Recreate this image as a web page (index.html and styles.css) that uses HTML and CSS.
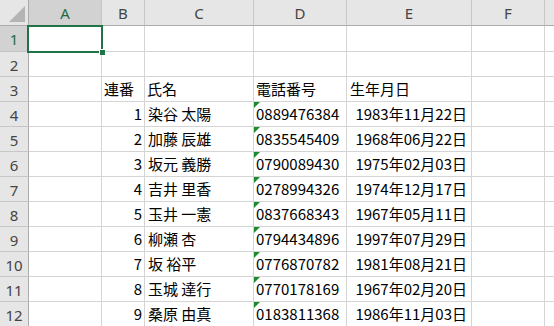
FILE: index.html
```html
<!DOCTYPE html>
<html lang="ja">
<head>
    <meta charset="UTF-8">
    <title>Sheet1</title>
    <link rel="stylesheet" href="styles.css">
</head>
<body>
    <div class="sheet">
        <div class="grid">
            <div class="row">
                <div class="corner"><span class="corner-mark"></span></div>
                <div class="colhead selected">A</div>
                <div class="colhead">B</div>
                <div class="colhead">C</div>
                <div class="colhead">D</div>
                <div class="colhead">E</div>
                <div class="colhead">F</div>
                <div class="colhead last"></div>
            </div>
            <div class="row">
                <div class="rowhead selected">1</div>
                <div class="cell"></div><div class="cell"></div><div class="cell"></div>
                <div class="cell"></div><div class="cell"></div><div class="cell"></div><div class="cell"></div>
            </div>
            <div class="row">
                <div class="rowhead">2</div>
                <div class="cell"></div><div class="cell"></div><div class="cell"></div>
                <div class="cell"></div><div class="cell"></div><div class="cell"></div><div class="cell"></div>
            </div>
            <div class="row">
                <div class="rowhead">3</div>
                <div class="cell"></div>
                <div class="cell">連番</div>
                <div class="cell">氏名</div>
                <div class="cell">電話番号</div>
                <div class="cell label">生年月日</div>
                <div class="cell"></div><div class="cell"></div>
            </div>
            <div class="row">
                <div class="rowhead">4</div>
                <div class="cell"></div>
                <div class="cell num">1</div>
                <div class="cell name">染谷 太陽</div>
                <div class="cell tel">0889476384</div>
                <div class="cell date">1983年11月22日</div>
                <div class="cell"></div><div class="cell"></div>
            </div>
            <div class="row">
                <div class="rowhead">5</div>
                <div class="cell"></div>
                <div class="cell num">2</div>
                <div class="cell name">加藤 辰雄</div>
                <div class="cell tel">0835545409</div>
                <div class="cell date">1968年06月22日</div>
                <div class="cell"></div><div class="cell"></div>
            </div>
            <div class="row">
                <div class="rowhead">6</div>
                <div class="cell"></div>
                <div class="cell num">3</div>
                <div class="cell name">坂元 義勝</div>
                <div class="cell tel">0790089430</div>
                <div class="cell date">1975年02月03日</div>
                <div class="cell"></div><div class="cell"></div>
            </div>
            <div class="row">
                <div class="rowhead">7</div>
                <div class="cell"></div>
                <div class="cell num">4</div>
                <div class="cell name">吉井 里香</div>
                <div class="cell tel">0278994326</div>
                <div class="cell date">1974年12月17日</div>
                <div class="cell"></div><div class="cell"></div>
            </div>
            <div class="row">
                <div class="rowhead">8</div>
                <div class="cell"></div>
                <div class="cell num">5</div>
                <div class="cell name">玉井 一憲</div>
                <div class="cell tel">0837668343</div>
                <div class="cell date">1967年05月11日</div>
                <div class="cell"></div><div class="cell"></div>
            </div>
            <div class="row">
                <div class="rowhead">9</div>
                <div class="cell"></div>
                <div class="cell num">6</div>
                <div class="cell name">柳瀬 杏</div>
                <div class="cell tel">0794434896</div>
                <div class="cell date">1997年07月29日</div>
                <div class="cell"></div><div class="cell"></div>
            </div>
            <div class="row">
                <div class="rowhead">10</div>
                <div class="cell"></div>
                <div class="cell num">7</div>
                <div class="cell name">坂 裕平</div>
                <div class="cell tel">0776870782</div>
                <div class="cell date">1981年08月21日</div>
                <div class="cell"></div><div class="cell"></div>
            </div>
            <div class="row">
                <div class="rowhead">11</div>
                <div class="cell"></div>
                <div class="cell num">8</div>
                <div class="cell name">玉城 達行</div>
                <div class="cell tel">0770178169</div>
                <div class="cell date">1967年02月20日</div>
                <div class="cell"></div><div class="cell"></div>
            </div>
            <div class="row">
                <div class="rowhead">12</div>
                <div class="cell"></div>
                <div class="cell num">9</div>
                <div class="cell name">桑原 由真</div>
                <div class="cell tel">0183811368</div>
                <div class="cell date">1986年11月03日</div>
                <div class="cell"></div><div class="cell"></div>
            </div>
        </div>
        <div class="selection"><span class="handle"></span></div>
    </div>
</body>
</html>
```

FILE: styles.css
```css
* {
    box-sizing: border-box;
}
body {
    margin: 0;
    width: 554px;
    height: 326px;
    overflow: hidden;
    background: #ffffff;
    font-family: "Noto Sans CJK JP", "Noto Sans", sans-serif;
    color: #000000;
}
.sheet {
    position: relative;
    width: 554px;
    height: 326px;
    overflow: hidden;
}
.grid {
    display: grid;
    grid-template-columns: 29px 73px 43px 109px 93px 125px 73px 40px;
    grid-template-rows: 26px 26px repeat(12, 25px);
}
.row {
    display: contents;
}
.corner, .colhead, .rowhead {
    background: #e6e6e6;
    color: #444444;
    font-family: "Noto Sans", "Liberation Sans", sans-serif;
    font-size: 15px;
    display: flex;
    align-items: center;
    justify-content: center;
}
.corner {
    position: relative;
    border-right: 1px solid #ababab;
    border-bottom: 1px solid #ababab;
}
.corner-mark {
    position: absolute;
    right: 3px;
    bottom: 3px;
    width: 0;
    height: 0;
    border-left: 16px solid transparent;
    border-bottom: 16px solid #b4b4b4;
}
.colhead {
    border-right: 1px solid #c6c6c6;
    border-bottom: 1px solid #ababab;
    padding-top: 1px;
}
.rowhead {
    border-right: 1px solid #ababab;
    border-bottom: 1px solid #c6c6c6;
    padding-top: 1px;
}
.colhead.selected, .rowhead.selected {
    background: #d2d2d2;
    color: #1f6b41;
}
.cell {
    position: relative;
    border-right: 1px solid #d4d4d4;
    border-bottom: 1px solid #d4d4d4;
    font-size: 15px;
    line-height: 24px;
    padding: 0 2px 0 2px;
    white-space: nowrap;
}
.num {
    text-align: right;
    padding-right: 2px;
}
.name {
    padding-left: 3px;
}
.label {
    padding-left: 3px;
}
.date {
    text-align: right;
    padding-right: 4px;
}
.tel::before {
    content: "";
    position: absolute;
    left: 0;
    top: 0;
    width: 0;
    height: 0;
    border-top: 6px solid #1e8a2e;
    border-right: 6px solid transparent;
}
.selection {
    position: absolute;
    left: 27px;
    top: 25px;
    width: 76px;
    height: 28px;
    border: 2px solid #217346;
}
.handle {
    position: absolute;
    right: -4px;
    bottom: -4px;
    width: 6px;
    height: 6px;
    background: #217346;
    border-left: 1px solid #ffffff;
    border-top: 1px solid #ffffff;
}
```
